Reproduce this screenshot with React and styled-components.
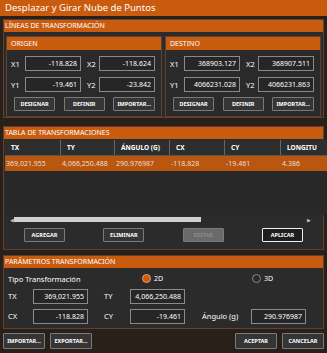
import React from 'react'
import styled, { createGlobalStyle } from 'styled-components'

const GlobalStyle = createGlobalStyle`
    html, body{
        margin: 0;
        padding: 0;
        background: #241a14;
    }
    *{
        box-sizing: border-box;
    }
`

const origen = { x1: '-118.828', x2: '-118.624', y1: '-19.461', y2: '-23.842' }
const destino = { x1: '368903.127', x2: '368907.511', y1: '4066231.028', y2: '4066231.863' }
const columns = ['TX', 'TY', 'ÁNGULO (G)', 'CX', 'CY', 'LONGITU']
const rows = [['369,021.955', '4,066,250.488', '290.976987', '-118.828', '-19.461', '4.386']]

const App = () => {
    return (
        <>
            <GlobalStyle />
            <Window>
                <TitleBar>Desplazar y Girar Nube de Puntos</TitleBar>
                <Content>
                    <Group space={0}>
                        <GroupHeader>Líneas de transformación</GroupHeader>
                        <PanelsRow>
                            <PointsPanel title="Origen" data={origen} />
                            <PointsPanel title="Destino" data={destino} />
                        </PanelsRow>
                    </Group>

                    <Group space={8}>
                        <GroupHeader>Tabla de transformaciones</GroupHeader>
                        <TableWrap>
                            <TableArea>
                                <HeadRow>
                                    {columns.map((c, i) => (
                                        <HeadCell key={i}>{c}</HeadCell>
                                    ))}
                                </HeadRow>
                                {rows.map((r, i) => (
                                    <DataRow key={i} selected>
                                        {r.map((v, j) => (
                                            <DataCell key={j}>{v}</DataCell>
                                        ))}
                                    </DataRow>
                                ))}
                            </TableArea>
                            <VScroll>
                                <ScrollMark />
                                <ScrollMark />
                            </VScroll>
                        </TableWrap>
                        <HScroll>
                            <Arrow>◀</Arrow>
                            <HTrack>
                                <HThumb style={{ width: '64%' }} />
                            </HTrack>
                            <Arrow>▶</Arrow>
                        </HScroll>
                        <TableButtons>
                            <Btn>Agregar</Btn>
                            <Btn>Eliminar</Btn>
                            <Btn disabled>Editar</Btn>
                            <Btn primary>Aplicar</Btn>
                        </TableButtons>
                    </Group>

                    <Group space={5}>
                        <GroupHeader>Parámetros transformación</GroupHeader>
                        <ParamsGrid>
                            <TypeLabel>Tipo Transformación</TypeLabel>
                            <RadioItem col={4} indent={12}>
                                <Radio checked /> 2D
                            </RadioItem>
                            <RadioItem col={6} indent={1}>
                                <Radio /> 3D
                            </RadioItem>

                            <ParamLabel>TX</ParamLabel>
                            <Field>369,021.955</Field>
                            <ParamLabel indent={16}>TY</ParamLabel>
                            <Field>4,066,250.488</Field>
                            <span />
                            <span />

                            <ParamLabel>CX</ParamLabel>
                            <Field>-118.828</Field>
                            <ParamLabel indent={16}>CY</ParamLabel>
                            <Field>-19.461</Field>
                            <ParamLabel indent={17}>Ángulo (g)</ParamLabel>
                            <Field>290.976987</Field>
                        </ParamsGrid>
                    </Group>

                    <Footer>
                        <FooterSide>
                            <Btn tall>Importar...</Btn>
                            <Btn tall>Exportar...</Btn>
                        </FooterSide>
                        <FooterSide>
                            <Btn tall>Aceptar</Btn>
                            <Btn tall>Cancelar</Btn>
                        </FooterSide>
                    </Footer>
                </Content>
            </Window>
        </>
    )
}

const PointsPanel = ({ title, data }) => {
    return (
        <Panel>
            <PanelHeader>{title}</PanelHeader>
            <CoordGrid>
                <CoordLabel>X1</CoordLabel>
                <Field>{data.x1}</Field>
                <CoordLabel gap>X2</CoordLabel>
                <Field>{data.x2}</Field>
                <CoordLabel>Y1</CoordLabel>
                <Field>{data.y1}</Field>
                <CoordLabel gap>Y2</CoordLabel>
                <Field>{data.y2}</Field>
            </CoordGrid>
            <PanelButtons>
                <Btn>Designar</Btn>
                <Btn>Definir</Btn>
                <Btn>Importar...</Btn>
            </PanelButtons>
        </Panel>
    )
}

//Styled-Components-CSS
const orange = '#c95b0f'
const border = '#5e4130'

const Window = styled.div`
    width: 327px;
    height: 353px;
    background: #2a2a2a;
    font-family: "Noto Sans", "Open Sans", sans-serif;
    color: white;
    overflow: hidden;
`

const TitleBar = styled.div`
    height: 16px;
    background: ${orange};
    font-size: 9.5px;
    line-height: 16px;
    padding-left: 5px;
    white-space: nowrap;
`

const Content = styled.div`
    display: flex;
    flex-direction: column;
    padding: 3px 3px 0 3px;
    background: #2a201a;
    height: 337px;
`

const Group = styled.div`
    margin-top: ${props => props.space}px;
    border: 1px solid ${border};
    background: #2b2b2b;
    display: flex;
    flex-direction: column;
`

const GroupHeader = styled.div`
    height: 12px;
    background: ${orange};
    font-size: 7px;
    line-height: 12px;
    text-transform: uppercase;
    padding-left: 1px;
    white-space: nowrap;
`

const PanelsRow = styled.div`
    display: flex;
    gap: 3px;
    padding: 4px 2px 0 2px;
`

const Panel = styled.div`
    flex: 1;
    border: 1px solid ${border};
    background: #2a2a2a;
`

const PanelHeader = styled.div`
    height: 13px;
    background: ${orange};
    font-size: 7px;
    line-height: 13px;
    text-transform: uppercase;
    padding-left: 4px;
`

const CoordGrid = styled.div`
    display: grid;
    grid-template-columns: 14px 56px 18px 56px;
    grid-auto-rows: 15px;
    row-gap: 6px;
    align-items: center;
    padding: 6px 0 0 4px;
`

const CoordLabel = styled.div`
    font-size: 7.5px;
    padding-left: ${props => (props.gap ? '6px' : '0')};
`

const Field = styled.div`
    height: 15px;
    border: 1px solid #8a8a8a;
    background: #262626;
    font-size: 7px;
    line-height: 13px;
    text-align: right;
    padding-right: 3px;
    white-space: nowrap;
    overflow: hidden;
`

const PanelButtons = styled.div`
    display: flex;
    justify-content: space-between;
    padding: 5px 6px 5px 7px;
`

const Btn = styled.div`
    height: ${props => (props.tall ? '16px' : '14px')};
    min-width: ${props => (props.tall ? '42px' : '41px')};
    padding: 0 3px;
    border: ${props => (props.primary ? '1.5px solid #f0f0f0' : '1px solid #7a7a7a')};
    background: ${props => (props.disabled ? '#6a6a6a' : props.primary ? '#1e1e1e' : '#353535')};
    color: ${props => (props.disabled ? '#8c8c8c' : 'white')};
    border-radius: 1px;
    font-size: 5.5px;
    font-weight: bold;
    text-transform: uppercase;
    display: flex;
    align-items: center;
    justify-content: center;
    white-space: nowrap;
`

const TableWrap = styled.div`
    display: flex;
    height: 75px;
    margin: 1px 1px 0 1px;
`

const TableArea = styled.div`
    flex: 1;
    background: #282828;
`

const HeadRow = styled.div`
    display: grid;
    grid-template-columns: 56px 54px 55px 55px 56px 56px;
    height: 16px;
    background: #2e2e2e;
    border-bottom: 1px solid #555;
    overflow: hidden;
`

const HeadCell = styled.div`
    font-size: 6.5px;
    font-weight: bold;
    line-height: 15px;
    padding-left: 6px;
    border-right: 1px solid #666;
    white-space: nowrap;
    overflow: hidden;
    &:last-child{
        border-right: none;
    }
`

const DataRow = styled.div`
    display: grid;
    grid-template-columns: 56px 54px 55px 55px 56px 56px;
    height: 15px;
    background: ${props => (props.selected ? '#b9560f' : 'transparent')};
    overflow: hidden;
`

const DataCell = styled.div`
    font-size: 7px;
    line-height: 15px;
    padding-left: 1px;
    color: #f3dccb;
    white-space: nowrap;
`

const VScroll = styled.div`
    width: 8px;
    background: #282828;
    display: flex;
    flex-direction: column;
    justify-content: space-between;
    align-items: center;
    padding: 21px 0 2px 0;
`

const ScrollMark = styled.div`
    width: 4px;
    height: 2px;
    background: #4a5560;
`

const HScroll = styled.div`
    display: flex;
    align-items: center;
    height: 9px;
    margin: 0 12px 0 5px;
`

const Arrow = styled.div`
    font-size: 5px;
    color: #bbb;
    width: 5px;
    text-align: center;
`

const HTrack = styled.div`
    flex: 1;
    height: 5px;
`

const HThumb = styled.div`
    height: 5px;
    background: #d0d0d0;
`

const TableButtons = styled.div`
    display: flex;
    justify-content: space-between;
    padding: 4px 20px 7px 20px;
`

const ParamsGrid = styled.div`
    display: grid;
    grid-template-columns: 25px 55px 42px 55px 66px 55px;
    grid-template-rows: 21px 20px 15px;
    align-items: start;
    padding: 0 0 4px 4px;
`

const TypeLabel = styled.div`
    grid-column: 1 / 4;
    align-self: center;
    font-size: 7.5px;
    white-space: nowrap;
`

const RadioItem = styled.div`
    grid-column: ${props => props.col} / ${props => props.col + 1};
    align-self: center;
    padding-left: ${props => props.indent}px;
    display: flex;
    align-items: center;
    gap: 3px;
    font-size: 7px;
`

const Radio = styled.span`
    width: 9px;
    height: 9px;
    border-radius: 50%;
    border: 1px solid ${props => (props.checked ? '#e8a060' : '#888')};
    background: ${props => (props.checked ? orange : 'transparent')};
    display: inline-block;
`

const ParamLabel = styled.div`
    font-size: 7.5px;
    line-height: 15px;
    padding-left: ${props => props.indent || 0}px;
    white-space: nowrap;
`

const Footer = styled.div`
    display: flex;
    justify-content: space-between;
    margin-top: 4px;
`

const FooterSide = styled.div`
    display: flex;
    gap: 5px;
`

export default App
